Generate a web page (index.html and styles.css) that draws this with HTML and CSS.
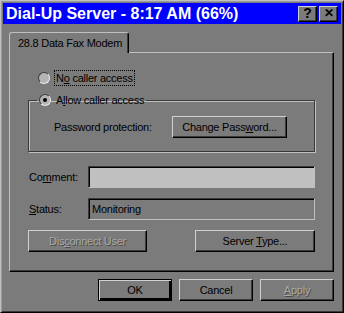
FILE: index.html
```html
<!DOCTYPE html>
<html lang="en">
<head>
    <meta charset="UTF-8">
    <title>Dial-Up Server</title>
    <link rel="stylesheet" href="styles.css">
</head>
<body>
    <div class="window">
        <div class="titlebar">
            <span class="title">Dial-Up Server - 8:17 AM (66%)</span>
            <div class="caption-btns">
                <button class="cap">?</button>
                <button class="cap close">&#x2715;</button>
            </div>
        </div>

        <div class="tabs">
            <div class="tab">28.8 Data Fax Modem</div>
        </div>

        <div class="panel">
            <div class="radio-row">
                <span class="radio"></span>
                <span class="focus">N<u>o</u> caller access</span>
            </div>

            <fieldset class="group">
                <legend><span class="radio checked"></span>A<u>l</u>low caller access</legend>
                <div class="pw-row">
                    <span class="pw-label">Password protection:</span>
                    <button class="btn pw-btn">Change Pass<u>w</u>ord...</button>
                </div>
            </fieldset>

            <div class="field-row">
                <span class="field-label">Co<u>m</u>ment:</span>
                <div class="field light"></div>
            </div>
            <div class="field-row">
                <span class="field-label"><u>S</u>tatus:</span>
                <div class="field">Monitoring</div>
            </div>

            <div class="btn-row">
                <button class="btn disabled wide">Dis<u>c</u>onnect User</button>
                <button class="btn wide">Server <u>T</u>ype...</button>
            </div>
        </div>

        <div class="footer">
            <button class="btn ok">OK</button>
            <button class="btn">Cancel</button>
            <button class="btn disabled"><u>A</u>pply</button>
        </div>
    </div>
</body>
</html>
```

FILE: styles.css
```css
body {
    margin: 0;
    background-color: #7b7b7b;
    font-family: "Liberation Sans", Arial, sans-serif;
    font-size: 11px;
    letter-spacing: -0.25px;
    color: #000;
}

.window {
    width: 344px;
    height: 313px;
    box-sizing: border-box;
    border: 1px solid;
    border-color: #c0c0c0 #000 #000 #c0c0c0;
    padding: 2px;
    box-shadow: inset 1px 1px #9a9a9a, inset -1px -1px #3a3a3a;
    background-color: #7b7b7b;
}

.titlebar {
    height: 21px;
    background-color: #0000ff;
    display: flex;
    align-items: center;
    justify-content: space-between;
    padding: 0 3px;
}

.title {
    color: #fff;
    font-size: 16px;
    font-weight: bold;
    letter-spacing: 0;
}

.caption-btns {
    display: flex;
    gap: 2px;
}

.cap {
    width: 19px;
    height: 16px;
    padding: 0;
    background-color: #7b7b7b;
    border: 1px solid;
    border-color: #d0d0d0 #000 #000 #d0d0d0;
    box-shadow: inset -1px -1px #3a3a3a;
    font-family: "Liberation Sans", Arial, sans-serif;
    font-weight: bold;
    font-size: 14px;
    line-height: 13px;
    color: #000;
}

.close {
    font-size: 12px;
}

.tabs {
    margin-top: 8px;
    padding-left: 6px;
    display: flex;
}

.tab {
    width: 120px;
    height: 21px;
    box-sizing: border-box;
    border: 1px solid #c0c0c0;
    border-right: 1px solid #000;
    border-bottom: none;
    border-radius: 3px 3px 0 0;
    box-shadow: inset -1px 0 #3a3a3a;
    padding: 4px 0 0 8px;
    background-color: #7b7b7b;
    margin-bottom: -1px;
    position: relative;
    white-space: nowrap;
}

.panel {
    margin-left: 6px;
    width: 325px;
    height: 220px;
    box-sizing: border-box;
    border: 1px solid;
    border-color: #c0c0c0 #000 #000 #c0c0c0;
    box-shadow: inset -1px -1px #3a3a3a;
    padding: 17px 18px 0 18px;
}

.radio-row {
    height: 16px;
    display: flex;
    align-items: center;
    padding-left: 10px;
}

.radio {
    width: 12px;
    height: 12px;
    box-sizing: border-box;
    border-radius: 50%;
    border: 1px solid;
    border-color: #3a3a3a #e8e8e8 #e8e8e8 #3a3a3a;
    background-color: #b4b4b4;
    margin-right: 5px;
    display: inline-flex;
    align-items: center;
    justify-content: center;
    vertical-align: middle;
}

.radio.checked::after {
    content: "";
    width: 4px;
    height: 4px;
    border-radius: 50%;
    background-color: #000;
}

.focus {
    outline: 1px dotted #000;
    padding: 0 1px;
    line-height: 14px;
}

.group {
    margin: 6px 0 0 0;
    width: 287px;
    box-sizing: border-box;
    padding: 0;
    border: 1px solid #3a3a3a;
    box-shadow: 1px 1px #c0c0c0, inset 1px 1px #c0c0c0;
    height: 60px;
}

.group legend {
    margin-left: 8px;
    padding: 0 2px;
    height: 16px;
    display: flex;
    align-items: center;
}

.pw-row {
    margin-top: 8px;
    display: flex;
    align-items: center;
}

.pw-label {
    width: 118px;
    padding-left: 25px;
    flex-shrink: 0;
}

.btn {
    height: 22px;
    padding: 0;
    background-color: #7b7b7b;
    border: 1px solid;
    border-color: #d0d0d0 #000 #000 #d0d0d0;
    box-shadow: inset -1px -1px #3a3a3a;
    font-family: "Liberation Sans", Arial, sans-serif;
    font-size: 11px;
    letter-spacing: -0.25px;
    color: #000;
    width: 74px;
}

.pw-btn {
    width: 115px;
}

.btn.disabled {
    color: #a8a8a8;
    text-shadow: 1px 1px #4a4a4a;
}

.field-row {
    display: flex;
    align-items: center;
    margin-top: 14px;
}

.field-row + .field-row {
    margin-top: 10px;
}

.field-label {
    width: 60px;
    padding-left: 1px;
    box-sizing: border-box;
}

.field {
    width: 227px;
    height: 22px;
    box-sizing: border-box;
    border: 1px solid;
    border-color: #3a3a3a #c0c0c0 #c0c0c0 #3a3a3a;
    box-shadow: inset 1px 1px #000;
    padding: 4px 0 0 3px;
}

.field.light {
    background-color: #c0c0c0;
}

.btn-row {
    margin-top: 10px;
    display: flex;
    justify-content: space-between;
}

.btn.wide {
    width: 120px;
}

.btn-row .disabled {
    width: 119px;
}

.footer {
    display: flex;
    justify-content: flex-end;
    gap: 7px;
    margin: 7px 7px 0 0;
}

.btn.ok {
    border: 1px solid #000;
    box-shadow: inset 1px 1px #d0d0d0, inset -2px -2px #000, inset -1px -1px #000;
    outline: none;
}
```
